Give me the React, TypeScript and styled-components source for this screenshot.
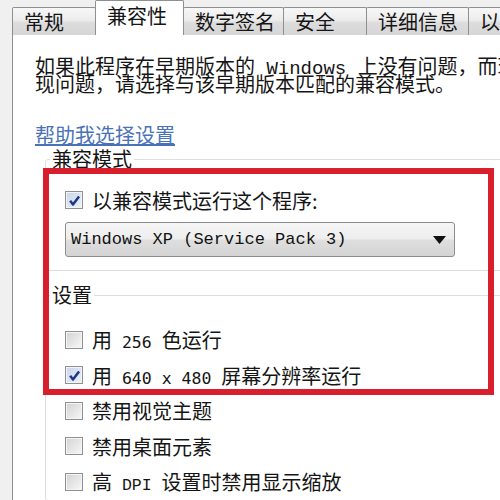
import styled, { createGlobalStyle } from 'styled-components';

const GlobalStyle = createGlobalStyle`
  html, body {
    margin: 0;
    padding: 0;
    background: #f0f0f0;
  }
  body {
    font-family: "Noto Sans CJK SC", "Noto Sans", sans-serif;
    color: #151515;
  }
`;

const Page = styled.div`
  position: relative;
  box-sizing: border-box;
  width: 500px;
  height: 500px;
  overflow: hidden;
  padding-left: 12px;
  background: #f0f0f0;
`;

const TabStrip = styled.div`
  display: flex;
  align-items: flex-end;
  height: 35px;
  margin-bottom: -1px;
  white-space: nowrap;
`;

const Tab = styled.div<{ $w: number; $active?: boolean }>`
  position: relative;
  z-index: ${p => (p.$active ? 1 : 0)};
  box-sizing: border-box;
  flex: none;
  width: ${p => p.$w}px;
  height: ${p => (p.$active ? 35 : 28)}px;
  margin-left: -1px;
  padding: 0 0 ${p => (p.$active ? 4 : 0)}px 11px;
  display: flex;
  align-items: center;
  border: 1px solid #8d8f91;
  border-bottom: none;
  border-radius: 2px 2px 0 0;
  background: ${p =>
    p.$active
      ? '#ffffff'
      : 'linear-gradient(#f7f7f7, #ececec 45%, #dcdcdc 55%, #d6d6d6)'};
  font-size: 20px;
  line-height: 1;
  overflow: hidden;
  &:first-child {
    margin-left: 0;
  }
`;

const Panel = styled.div`
  height: 470px;
  background: #ffffff;
  border-top: 1px solid #8d8f91;
  border-left: 1px solid #8d8f91;
  padding: 22px 0 0 22px;
  overflow: hidden;
`;

const Description = styled.p`
  margin: 0;
  font-size: 20px;
  line-height: 18px;
  white-space: nowrap;
`;

const Latin = styled.span<{ $serif?: boolean; $size?: number }>`
  font-family: ${p => (p.$serif ? '"Liberation Mono"' : '"DejaVu Sans Mono"')}, monospace;
  font-size: ${p => p.$size || 16.5}px;
  line-height: 0;
  white-space: pre;
`;

const HelpLink = styled.a`
  display: block;
  width: fit-content;
  margin-top: 32px;
  font-size: 20px;
  line-height: 20px;
  color: #4a72b6;
  text-decoration: underline;
  text-underline-offset: 1px;
`;

const Group = styled.fieldset<{ $top: number }>`
  box-sizing: border-box;
  width: 470px;
  margin: ${p => p.$top}px 0 0 10px;
  padding: 0 0 0 4px;
  border: 1px solid #dcdfe2;
  border-radius: 3px;
`;

const Legend = styled.legend`
  padding: 0 2px;
  font-size: 20px;
  line-height: 22px;
`;

const GroupBody = styled.div<{ $pt: number; $pb: number }>`
  padding: ${p => p.$pt}px 0 ${p => p.$pb}px 15px;
`;

const Row = styled.div<{ $h: number }>`
  display: flex;
  align-items: center;
  gap: 9px;
  height: ${p => p.$h}px;
  font-size: 20px;
  white-space: nowrap;
`;

const Box = styled.span<{ $checked?: boolean }>`
  box-sizing: border-box;
  flex: none;
  width: 18px;
  height: 18px;
  display: flex;
  align-items: center;
  justify-content: center;
  border: 1px solid #8f9092;
  box-shadow: inset 0 0 0 1px #f4f4f4;
  background: ${p =>
    p.$checked
      ? 'linear-gradient(135deg, #c9d3ea, #eef2fa)'
      : 'linear-gradient(135deg, #d2d2d2, #f8f8f8)'};
`;

const Select = styled.div`
  box-sizing: border-box;
  width: 390px;
  height: 35px;
  margin-top: 10px;
  display: flex;
  align-items: center;
  justify-content: space-between;
  padding: 0 8px 0 5px;
  border: 1px solid #8b8c8e;
  border-radius: 3px;
  background: linear-gradient(#f6f6f6, #ededed 48%, #dedede 52%, #d4d4d4);
  font-family: "Liberation Mono", monospace;
  font-size: 17px;
  white-space: pre;
  color: #111;
`;

const Highlight = styled.div`
  position: absolute;
  left: 43px;
  top: 168px;
  width: 451px;
  height: 227px;
  box-sizing: border-box;
  border: 6px solid #d71f2d;
  pointer-events: none;
`;

const Check = ({ checked }: { checked?: boolean }) => (
  <Box $checked={checked}>
    {checked && (
      <svg width="13" height="13" viewBox="0 0 12 12">
        <path d="M2 6.3 L4.6 9.6 L10.2 2.2" fill="none" stroke="#1c3987" strokeWidth="2.3" strokeLinejoin="round" />
      </svg>
    )}
  </Box>
);

const tabs = [
  { label: '常规', w: 84 },
  { label: '兼容性', w: 89, active: true },
  { label: '数字签名', w: 101 },
  { label: '安全', w: 84 },
  { label: '详细信息', w: 103 },
  { label: '以下版本', w: 80 },
];

export default function App() {
  return (
    <>
      <GlobalStyle />
      <Page>
        <TabStrip>
          {tabs.map(t => (
            <Tab key={t.label} $w={t.w} $active={t.active}>
              {t.label}
            </Tab>
          ))}
        </TabStrip>
        <Panel>
          <Description>
            如果此程序在早期版本的<Latin $serif $size={19}> Windows </Latin>上没有问题，而现在出
            <br />
            现问题，请选择与该早期版本匹配的兼容模式。
          </Description>
          <HelpLink>帮助我选择设置</HelpLink>
          <Group $top={3}>
            <Legend>兼容模式</Legend>
            <GroupBody $pt={18} $pb={13}>
              <Row $h={24}>
                <Check checked />
                以兼容模式运行这个程序:
              </Row>
              <Select>
                Windows XP (Service Pack 3)
                <svg width="13" height="8" viewBox="0 0 13 8">
                  <polygon points="0,0 13,0 6.5,8" fill="#111" />
                </svg>
              </Select>
            </GroupBody>
          </Group>
          <Group $top={13}>
            <Legend>设置</Legend>
            <GroupBody $pt={16} $pb={0}>
              <Row $h={35.5}>
                <Check />
                <span>
                  用<Latin> 256 </Latin>色运行
                </span>
              </Row>
              <Row $h={35.5}>
                <Check checked />
                <span>
                  用<Latin> 640 x 480 </Latin>屏幕分辨率运行
                </span>
              </Row>
              <Row $h={35.5}>
                <Check />
                禁用视觉主题
              </Row>
              <Row $h={35.5}>
                <Check />
                禁用桌面元素
              </Row>
              <Row $h={35.5}>
                <Check />
                <span>
                  高<Latin $serif> DPI </Latin>设置时禁用显示缩放
                </span>
              </Row>
            </GroupBody>
          </Group>
        </Panel>
        <Highlight />
      </Page>
    </>
  );
}
